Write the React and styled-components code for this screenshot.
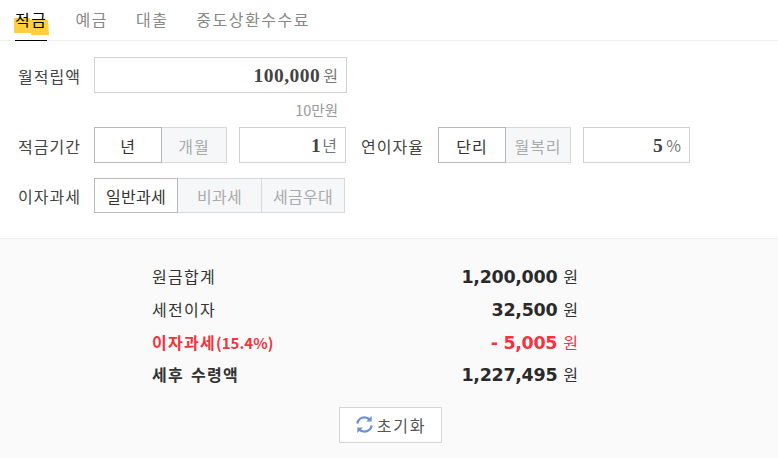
import React from "react"
import styled, { createGlobalStyle } from "styled-components"

const GlobalStyle = createGlobalStyle`
  html, body { margin: 0; padding: 0; background: #fff; }
  body { font-family: "Noto Sans CJK KR", "Noto Sans", sans-serif; color: #333; }
`

const Page = styled.div`
  width: 778px;
  height: 458px;
  overflow: hidden;
  display: flex;
  flex-direction: column;
`

const TabBar = styled.div`
  height: 40px;
  display: flex;
  gap: 28px;
  padding-left: 15px;
  border-bottom: 1px solid #f0f0f0;
  flex-shrink: 0;
`

const Tab = styled.div`
  position: relative;
  height: 41px;
  box-sizing: border-box;
  line-height: 39px;
  font-size: 16px;
  letter-spacing: 1.5px;
  color: ${p => (p.$active ? "#000" : "#888")};
  border-bottom: 1px solid ${p => (p.$active ? "#000" : "transparent")};
  span { position: relative; }
`

const Marker = styled.svg`
  position: absolute;
  left: -1px;
  top: 18px;
`

const Form = styled.div`
  height: 197px;
  box-sizing: border-box;
  padding: 16px 0 0 18px;
  display: flex;
  flex-direction: column;
  flex-shrink: 0;
`

const Row = styled.div`
  display: flex;
  align-items: center;
  height: ${p => p.$h || 36}px;
  margin-top: ${p => p.$mt || 0}px;
`

const Label = styled.div`
  width: 76px;
  padding-top: 1px;
  font-size: 16px;
  letter-spacing: 1px;
  color: #444;
  flex-shrink: 0;
`

const Input = styled.div`
  width: ${p => p.$w}px;
  height: 36px;
  box-sizing: border-box;
  margin-left: ${p => p.$ml || 0}px;
  border: 1px solid #d2d2d2;
  display: flex;
  align-items: baseline;
  justify-content: flex-end;
  padding-right: 8px;
  line-height: 34px;
  background: #fff;
`

const InputValue = styled.b`
  font-family: "Liberation Serif", serif;
  font-size: 19.5px;
  letter-spacing: 0.5px;
  color: #444;
  margin-right: ${p => p.$mr || 3}px;
`

const Unit = styled.span`
  font-size: 16px;
  color: #777;
`

const Note = styled.div`
  height: 34px;
  width: 320px;
  text-align: right;
  font-size: 14.5px;
  line-height: 33px;
  color: #999;
`

const Toggle = styled.div`
  display: flex;
  flex-shrink: 0;
`

const Option = styled.div`
  width: ${p => p.$w}px;
  height: ${p => p.$h || 36}px;
  box-sizing: border-box;
  margin-left: ${p => (p.$first ? 0 : -1)}px;
  padding-top: 1px;
  display: flex;
  align-items: center;
  justify-content: center;
  font-size: 16px;
  letter-spacing: ${p => (p.$tight ? 0.3 : 1)}px;
  position: relative;
  z-index: ${p => (p.$on ? 1 : 0)};
  border: 1px solid ${p => (p.$on ? "#b8b8b8" : "#d8d8d8")};
  background: ${p => (p.$on ? "#fff" : "#f6f7f9")};
  color: ${p => (p.$on ? "#333" : "#aaa")};
`

const RateLabel = styled(Label)`
  width: 63px;
  margin-left: 15px;
  margin-right: 14px;
`

const Result = styled.div`
  flex: 1;
  background: #fafafa;
  border-top: 1px solid #eee;
  padding: 21px 0 0 152px;
`

const ResultRow = styled.div`
  width: 426px;
  height: 32.7px;
  display: flex;
  align-items: center;
  justify-content: space-between;
  color: ${p => (p.$red ? "#f5333f" : "#333")};
`

const ResultLabel = styled.div`
  font-size: 16px;
  font-weight: ${p => (p.$bold ? 700 : 400)};
  letter-spacing: 1.3px;
  word-spacing: 2px;
`

const LabelNote = styled.span`
  font-size: 15px;
  letter-spacing: 0;
`

const Amount = styled.div`
  display: flex;
  align-items: baseline;
  gap: 6px;
  b {
    font-family: "DejaVu Sans", sans-serif;
    font-size: 17.5px;
    letter-spacing: -0.3px;
    color: ${p => (p.$red ? "#f5333f" : "#2a2a2a")};
  }
  span { font-size: 16px; }
`

const ResetButton = styled.button`
  display: flex;
  align-items: center;
  justify-content: center;
  gap: 3px;
  width: 103px;
  height: 36px;
  margin: 16px 0 0 187px;
  padding: 0;
  border: 1px solid #d5d5d5;
  background: #fff;
  font-family: inherit;
  font-size: 16px;
  letter-spacing: 1.8px;
  color: #555;
`

const RESULTS = [
  { label: "원금합계", value: "1,200,000" },
  { label: "세전이자", value: "32,500" },
  { label: "이자과세", note: "(15.4%)", value: "- 5,005", red: true, bold: true },
  { label: "세후 수령액", value: "1,227,495", bold: true },
]

function RefreshIcon() {
  return (
    <svg width="19" height="19" viewBox="0 0 18 18" fill="none">
      <path d="M2.2 8C2.8 4.6 5.6 2.2 9 2.2c2 0 3.7.8 5 2.2" stroke="#6d8fd6" strokeWidth="2.2" />
      <path d="M15.8 1v5.2h-5.2z" fill="#6d8fd6" />
      <path d="M15.8 10c-.6 3.4-3.4 5.8-6.8 5.8-2 0-3.7-.8-5-2.2" stroke="#6d8fd6" strokeWidth="2.2" />
      <path d="M2.2 17v-5.2h5.2z" fill="#6d8fd6" />
    </svg>
  )
}

export default function App() {
  return (
    <Page>
      <GlobalStyle />
      <TabBar>
        <Tab $active>
          <Marker width="35" height="17" viewBox="0 0 35 17">
            <path d="M0 0h16v2h18l1 15H17v-2H0z" fill="#ffcf40" />
          </Marker>
          <span>적금</span>
        </Tab>
        <Tab>예금</Tab>
        <Tab>대출</Tab>
        <Tab>중도상환수수료</Tab>
      </TabBar>
      <Form>
        <Row>
          <Label>월적립액</Label>
          <Input $w={253}>
            <InputValue>100,000</InputValue>
            <Unit>원</Unit>
          </Input>
        </Row>
        <Note>10만원</Note>
        <Row>
          <Label>적금기간</Label>
          <Toggle>
            <Option $first $on $w={68}>년</Option>
            <Option $w={66}>개월</Option>
          </Toggle>
          <Input $w={107} $ml={12}>
            <InputValue $mr={1}>1</InputValue>
            <Unit>년</Unit>
          </Input>
          <RateLabel>연이자율</RateLabel>
          <Toggle>
            <Option $first $on $w={68}>단리</Option>
            <Option $w={66}>월복리</Option>
          </Toggle>
          <Input $w={107} $ml={12}>
            <InputValue>5</InputValue>
            <Unit>%</Unit>
          </Input>
        </Row>
        <Row $h={35} $mt={15}>
          <Label>이자과세</Label>
          <Toggle>
            <Option $first $on $tight $w={84} $h={35}>일반과세</Option>
            <Option $tight $w={85} $h={35}>비과세</Option>
            <Option $tight $w={84} $h={35}>세금우대</Option>
          </Toggle>
        </Row>
      </Form>
      <Result>
        {RESULTS.map(r => (
          <ResultRow key={r.label} $red={r.red}>
            <ResultLabel $bold={r.bold}>
              {r.label}
              {r.note && <LabelNote>{r.note}</LabelNote>}
            </ResultLabel>
            <Amount $red={r.red}>
              <b>{r.value}</b>
              <span>원</span>
            </Amount>
          </ResultRow>
        ))}
        <ResetButton>
          <RefreshIcon />
          초기화
        </ResetButton>
      </Result>
    </Page>
  )
}
